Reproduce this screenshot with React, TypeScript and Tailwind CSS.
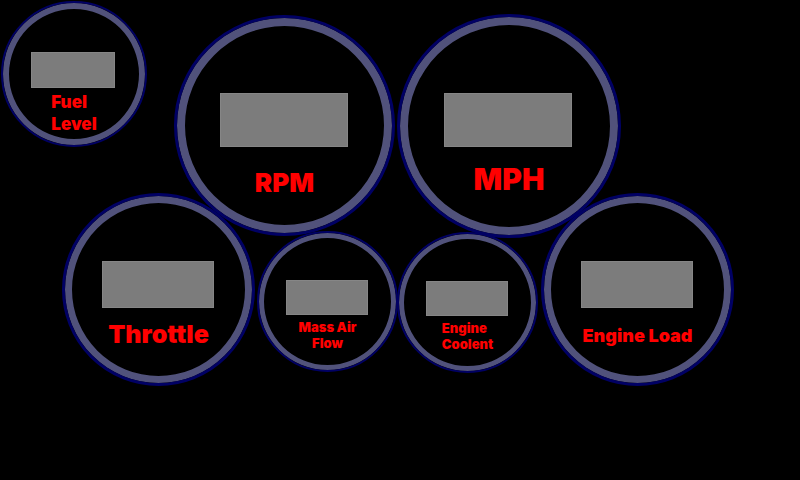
import { clsx } from "clsx";

type GaugeProps = {
  id: string;
  lines: string[];
  dial: string;
  display: string;
  label: string;
};

function Gauge({ id, lines, dial, display, label }: GaugeProps) {
  return (
    <section
      className={clsx(
        "flex shrink-0 flex-col items-center rounded-full border-[#000064]",
        dial,
      )}
    >
      <output
        id={id}
        className={clsx("mr-0.5 block shrink-0 border border-[#868686] bg-[#7c7c7c]", display)}
      />
      <label htmlFor={id} className={clsx("font-black text-[#ff0000]", label)}>
        {lines.map((line) => (
          <span key={line} className="block whitespace-nowrap">
            {line}
          </span>
        ))}
      </label>
    </section>
  );
}

export default function App() {
  return (
    <main className="min-h-screen overflow-hidden bg-black pt-px font-[Inter,'Open_Sans',sans-serif]">
      <div className="flex items-start pl-px">
        <Gauge
          id="fuel"
          lines={["Fuel", "Level"]}
          dial="size-[146px] border-2 pt-[49px] shadow-[inset_0_0_0_6px_#51527b]"
          display="h-9 w-[84px]"
          label="mt-[3px] text-[17px] leading-[22px]"
        />
        <div className="ml-[27px] flex items-start gap-0.5 pt-[13px]">
          <Gauge
            id="rpm"
            lines={["RPM"]}
            dial="mt-px size-[221px] border-3 pt-[75px] shadow-[inset_0_0_0_8px_#51527b]"
            display="h-[54px] w-32"
            label="mt-5 text-[26px] leading-8"
          />
          <Gauge
            id="mph"
            lines={["MPH"]}
            dial="size-[224px] border-3 pt-[76px] shadow-[inset_0_0_0_8px_#51527b]"
            display="h-[54px] w-32"
            label="mt-4 text-[30px] leading-8"
          />
        </div>
      </div>
      <div className="-mt-[45px] flex items-start gap-0.5 pl-[62px]">
        <Gauge
          id="throttle"
          lines={["Throttle"]}
          dial="size-[193px] border-3 pt-[65px] shadow-[inset_0_0_0_7px_#51527b]"
          display="h-[47px] w-28"
          label="mt-2.5 text-[25px] leading-8"
        />
        <div className="flex items-start pt-[38px]">
          <Gauge
            id="air-flow"
            lines={["Mass Air", "Flow"]}
            dial="size-[141px] border-2 pt-[47px] shadow-[inset_0_0_0_5px_#51527b]"
            display="h-[35px] w-[82px]"
            label="mt-1 text-center text-[13px] leading-4"
          />
          <Gauge
            id="coolant"
            lines={["Engine", "Coolent"]}
            dial="-ml-px mr-px mt-px size-[141px] border-2 pt-[47px] shadow-[inset_0_0_0_5px_#51527b]"
            display="h-[35px] w-[82px]"
            label="mt-1 text-[13px] leading-4"
          />
        </div>
        <Gauge
          id="engine-load"
          lines={["Engine Load"]}
          dial="size-[193px] border-3 pt-[65px] shadow-[inset_0_0_0_7px_#51527b]"
          display="h-[47px] w-28"
          label="mt-4 text-[18px] leading-6"
        />
      </div>
    </main>
  );
}
